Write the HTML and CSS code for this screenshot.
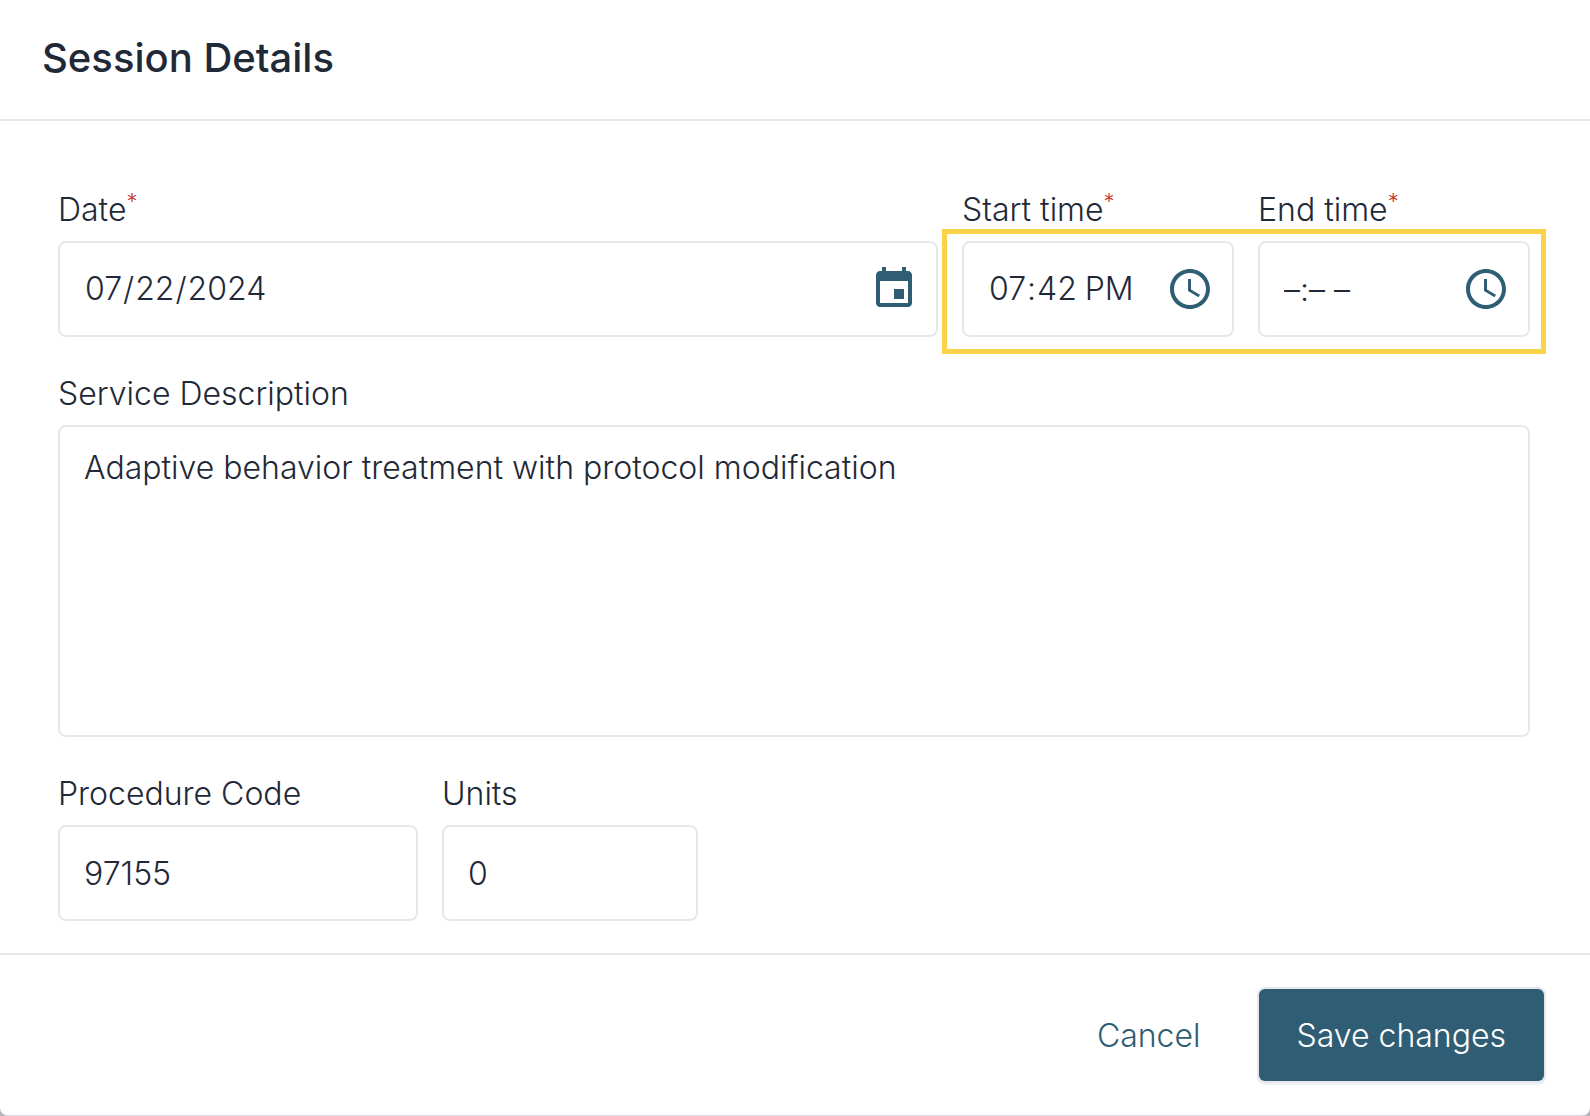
FILE: index.html
```html
<!DOCTYPE html>
<html lang="en-US">
<head>
    <meta charset="UTF-8">
    <meta name="viewport" content="width=device-width, initial-scale=1.0">
    <title>Session Details</title>
    <link rel="stylesheet" href="styles.css">
</head>
<body>
    <form class="modal">
        <header class="modal-header">
            <h1 class="modal-title">Session Details</h1>
        </header>
        <main class="modal-body">
            <div class="row">
                <div class="field date-field">
                    <label for="date">Date<sup class="required">*</sup></label>
                    <div class="control">
                        <input id="date" class="input" type="date" value="2024-07-22" required>
                        <svg class="icon" viewBox="0 0 24 24" aria-hidden="true">
                            <path d="M19 3h-1V1h-2v2H8V1H6v2H5c-1.11 0-1.99.9-1.99 2L3 19c0 1.1.89 2 2 2h14c1.1 0 2-.9 2-2V5c0-1.1-.9-2-2-2zm0 16H5V8h14v11zM12 12h5v5h-5z"/>
                        </svg>
                    </div>
                </div>
                <div class="times">
                    <div class="field time-field">
                        <label for="start">Start time<sup class="required">*</sup></label>
                        <div class="control">
                            <input id="start" class="input" type="time" value="19:42" required>
                            <svg class="icon" viewBox="0 0 24 24" aria-hidden="true">
                                <path d="M11.99 2C6.47 2 2 6.48 2 12s4.47 10 9.99 10C17.52 22 22 17.52 22 12S17.52 2 11.99 2zM12 20c-4.42 0-8-3.58-8-8s3.58-8 8-8 8 3.58 8 8-3.58 8-8 8zm.5-13H11v6l5.25 3.15.75-1.23-4.5-2.67z"/>
                            </svg>
                        </div>
                    </div>
                    <div class="field time-field">
                        <label for="end">End time<sup class="required">*</sup></label>
                        <div class="control">
                            <input id="end" class="input" type="text" value="–:– –" required>
                            <svg class="icon" viewBox="0 0 24 24" aria-hidden="true">
                                <path d="M11.99 2C6.47 2 2 6.48 2 12s4.47 10 9.99 10C17.52 22 22 17.52 22 12S17.52 2 11.99 2zM12 20c-4.42 0-8-3.58-8-8s3.58-8 8-8 8 3.58 8 8-3.58 8-8 8zm.5-13H11v6l5.25 3.15.75-1.23-4.5-2.67z"/>
                            </svg>
                        </div>
                    </div>
                    <div class="highlight"></div>
                </div>
            </div>
            <div class="field">
                <label for="description">Service Description</label>
                <textarea id="description" class="input textarea">Adaptive behavior treatment with protocol modification</textarea>
            </div>
            <div class="row">
                <div class="field code-field">
                    <label for="code">Procedure Code</label>
                    <input id="code" class="input" type="text" value="97155">
                </div>
                <div class="field units-field">
                    <label for="units">Units</label>
                    <input id="units" class="input" type="text" value="0">
                </div>
            </div>
        </main>
        <footer class="modal-footer">
            <button class="btn btn-cancel" type="button">Cancel</button>
            <button class="btn btn-save" type="submit">Save changes</button>
        </footer>
    </form>
</body>
</html>
```
FILE: styles.css
```css
*{
    box-sizing: border-box;
}
body{
    margin: 0;
    background: #b4b5b9;
    color: #1f2937;
    font-family: Inter, "Open Sans", sans-serif;
    font-size: 32px;
    font-weight: 300;
    line-height: 48px;
}
.modal{
    background: #fff;
    border-bottom: 1px solid #dcdde0;
    border-radius: 0 0 8px 8px;
}
.modal-header{
    padding: 34px 42px 37px;
    border-bottom: 2px solid #e5e7eb;
}
.modal-title{
    margin: 0;
    font-size: 40px;
    font-weight: 500;
    line-height: 48px;
}
.modal-body{
    display: flex;
    flex-direction: column;
    gap: 32px;
    padding: 64px 60px 32px 58px;
}
.row{
    display: flex;
    gap: 24px;
}
.field{
    display: flex;
    flex-direction: column;
    gap: 6px;
    line-height: 50px;
}
.date-field{
    flex: 1;
}
.times{
    display: flex;
    gap: 24px;
    position: relative;
}
.time-field{
    width: 272px;
}
.code-field{
    width: 360px;
}
.units-field{
    width: 256px;
}
.required{
    color: #c8372d;
    font-size: 22px;
    line-height: 0;
    vertical-align: 12px;
}
.control{
    position: relative;
}
.input{
    display: block;
    width: 100%;
    height: 96px;
    margin: 0;
    padding: 0 24px;
    border: 2px solid #e5e7eb;
    border-radius: 8px;
    background: #fff;
    color: inherit;
    font: inherit;
}
.textarea{
    height: 312px;
    padding: 16px 24px;
    resize: none;
}
.input::-webkit-calendar-picker-indicator{
    position: absolute;
    right: 20px;
    width: 48px;
    height: 48px;
    margin: 0;
    padding: 0;
    opacity: 0;
}
.icon{
    position: absolute;
    top: 24px;
    right: 20px;
    width: 48px;
    height: 48px;
    fill: #2f5d74;
    pointer-events: none;
}
/* frame around both time inputs */
.highlight{
    position: absolute;
    top: 44px;
    right: -16px;
    bottom: -17px;
    left: -20px;
    border: 5px solid #f9d44b;
    pointer-events: none;
}
.modal-footer{
    display: flex;
    justify-content: flex-end;
    gap: 20px;
    padding: 34px 46px 34px;
    border-top: 2px solid #e5e7eb;
}
.btn{
    height: 92px;
    padding: 2px 38px 0;
    border: 0;
    border-radius: 6px;
    font: inherit;
    cursor: pointer;
}
.btn-cancel{
    background: transparent;
    color: #2f5d74;
}
.btn-save{
    background: #2f5d74;
    color: #fff;
    box-shadow: 0 0 0 2px #e5e7eb, 0 2px 0 2px #f1f1f3;
}
```
